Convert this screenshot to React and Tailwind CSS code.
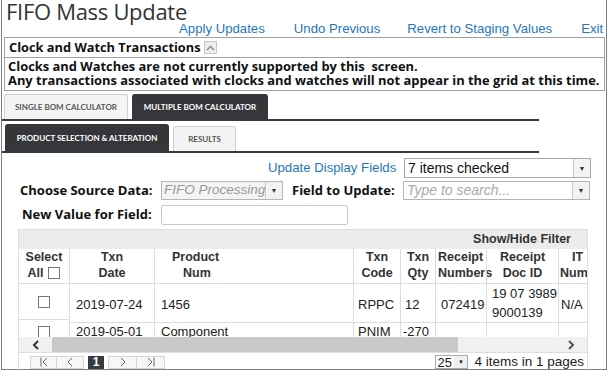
import React from 'react';

const linkCls = 'shrink-0 whitespace-nowrap text-[#2677bb] hover:underline cursor-pointer';

function Arrow() {
  return (
    <span className="flex h-full w-[17px] shrink-0 items-center justify-center border-l border-[#c9c9c9] bg-[#f3f3f3]">
      <span className="text-[7px] leading-none text-[#333]">▼</span>
    </span>
  );
}

function Check() {
  return <span className="inline-block h-[12px] w-[12px] border border-[#767676] bg-white" />;
}

function App() {
  const head = [
    ['Select', 'All'],
    ['Txn', 'Date'],
    ['Product', 'Num'],
    ['Txn', 'Code'],
    ['Txn', 'Qty'],
    ['Receipt', 'Numbers'],
    ['Receipt', 'Doc ID'],
    ['IT', 'Num'],
  ];

  return (
    <div className="h-[372px] w-[608px] overflow-hidden bg-white">
      <div className="relative ml-[1px] h-[370px] w-[606px] border-x border-b border-[#808080] font-['Liberation_Sans',Arial,sans-serif] text-[#222]">
        {/* Title */}
        <h1 className="whitespace-nowrap pl-[4px] font-['Open_Sans',sans-serif] text-[22px] leading-[22px] tracking-[-0.3px] text-[#333]">FIFO Mass Update</h1>
        <div className="flex h-[14px] items-center whitespace-nowrap text-[13.2px] leading-none">
          <span className={`ml-[177px] ${linkCls}`}>Apply Updates</span>
          <span className={`ml-[29px] ${linkCls}`}>Undo Previous</span>
          <span className={`ml-[27px] ${linkCls}`}>Revert to Staging Values</span>
          <span className={`ml-[29px] ${linkCls}`}>Exit</span>
        </div>

        {/* Clock panel */}
        <div className="ml-[2px] mt-[1px] w-[601px] border border-[#a0a0a0] font-['Open_Sans',sans-serif] font-bold text-[#111]">
          <div className="flex h-[20px] items-center border-b border-[#a0a0a0] pl-[4px] text-[12.8px]">
            Clock and Watch Transactions
            <span className="ml-[3px] flex h-[13px] w-[13px] items-center justify-center border border-[#c8c8c8] bg-[#ececec]">
              <svg width="9" height="6" viewBox="0 0 9 6"><path d="M1 5 L4.5 1.5 L8 5" fill="none" stroke="#888" strokeWidth="1.4" /></svg>
            </span>
          </div>
          <div className="whitespace-pre px-[3px] pb-[3px] pt-[1px] text-[12.9px] leading-[14px]">
            <div>Clocks and Watches are not currently supported by this  screen.</div>
            <div>Any transactions associated with clocks and watches will not appear in the grid at this time.</div>
          </div>
        </div>

        {/* Outer tabs */}
        <div className="mt-[3px] flex w-[537px] items-end gap-[4px] border-b-[2px] border-[#3a3b3f] pl-[2px] font-['Lato',sans-serif] text-[8px] font-bold">
          <div className="flex h-[25px] w-[124px] items-center justify-center rounded-t-[3px] border border-b-0 border-[#cfcfcf] bg-[#f4f4f4] text-[#555]">SINGLE BOM CALCULATOR</div>
          <div className="flex h-[25px] w-[136px] items-center justify-center rounded-t-[3px] bg-[#35363a] text-white">MULTIPLE BOM CALCULATOR</div>
        </div>
        <div className="mt-[3px] flex w-[537px] items-end gap-[4px] border-b-[2px] border-[#3a3b3f] pl-[3px] font-['Lato',sans-serif] text-[8px] font-bold">
          <div className="flex h-[27px] w-[164px] items-center justify-center rounded-t-[3px] bg-[#35363a] text-white">PRODUCT SELECTION &amp; ALTERATION</div>
          <div className="flex h-[25px] w-[63px] items-center justify-center rounded-t-[3px] border border-b-0 border-[#cfcfcf] bg-[#f4f4f4] text-[#555]">RESULTS</div>
        </div>

        {/* Form */}
        <div className="mt-[5px] flex h-[20px] items-center">
          <span className={`ml-[266px] w-[136px] text-[13.2px] ${linkCls}`}>Update Display Fields</span>
          <div className="flex h-[20px] w-[187px] items-center border border-[#a9a9a9] bg-white">
            <span className="flex-1 pl-[3px] text-[14px] text-[#111]">7 items checked</span>
            <Arrow />
          </div>
        </div>
        <div className="mt-[3px] flex h-[19px] items-center whitespace-nowrap font-['Open_Sans',sans-serif] text-[13px] font-bold text-[#111]">
          <span className="ml-[18px] w-[141px]">Choose Source Data:</span>
          <div className="flex h-[19px] w-[122px] items-center border border-[#b5b5b5] bg-[#f4f4f4]">
            <span className="flex-1 overflow-hidden pl-[2px] font-['Liberation_Sans',Arial,sans-serif] text-[13.5px] font-normal italic text-[#999]">FIFO Processing</span>
            <Arrow />
          </div>
          <span className="ml-[9px] w-[111px]">Field to Update:</span>
          <div className="flex h-[19px] w-[187px] items-center border border-[#b5b5b5] bg-white">
            <span className="flex-1 pl-[3px] font-['Liberation_Sans',Arial,sans-serif] text-[14px] font-normal italic text-[#aaa]">Type to search...</span>
            <Arrow />
          </div>
        </div>
        <div className="mt-[5px] flex h-[20px] items-center whitespace-nowrap font-['Open_Sans',sans-serif] text-[13px] font-bold text-[#111]">
          <span className="ml-[20px] w-[139px]">New Value for Field:</span>
          <div className="h-[20px] w-[187px] rounded-[2px] border border-[#c8c8c8] bg-white" />
        </div>

        {/* Grid */}
        <div className="ml-[16px] mt-[4px] w-[570px] overflow-hidden border-x border-t border-[#dedede] text-[13px]">
          <div className="flex h-[19px] items-center justify-end bg-[#ececec] pr-[16px] text-[12.5px] font-bold text-[#333]">Show/Hide Filter</div>
          <div className="h-[88px] overflow-hidden">
            <div className="grid w-[570px] grid-cols-[50px_85px_199px_47px_35px_51px_72px_31px]">
              {head.map(([a, b], i) => (
                <div key={i} className={`flex h-[35px] flex-col justify-center whitespace-nowrap border-b border-[#dcdcdc] pb-[3px] text-[12.5px] font-bold leading-[16px] text-[#333] ${i > 0 ? 'border-l' : ''} ${i === 2 ? 'pl-[17px]' : i === 5 ? 'pl-[2px]' : i === 7 ? 'pl-[1px]' : 'items-center'}`}>
                  <span className={i === 7 ? 'pl-[12px]' : ''}>{a}</span>
                  {i === 0 ? (
                    <span className="flex items-center gap-[5px]">All <Check /></span>
                  ) : (
                    <span className={i === 2 ? 'pl-[11px]' : ''}>{b}</span>
                  )}
                </div>
              ))}

              {/* row 1 */}
              <div className="flex h-[36px] items-center justify-center border-b border-[#dcdcdc]"><Check /></div>
              <div className="flex items-center border-b border-l border-[#dcdcdc] pl-[6px] pt-[3px]">2019-07-24</div>
              <div className="flex items-center border-b border-l border-[#dcdcdc] pl-[6px] pt-[3px]">1456</div>
              <div className="flex items-center border-b border-l border-[#dcdcdc] pl-[4px] pt-[3px]">RPPC</div>
              <div className="flex items-center border-b border-l border-[#dcdcdc] pl-[4px] pt-[3px]">12</div>
              <div className="flex items-center border-b border-l border-[#dcdcdc] pl-[5px] pt-[3px]">072419</div>
              <div className="flex flex-col justify-center whitespace-nowrap border-b border-l border-[#dcdcdc] pl-[5px] leading-[19px]">
                <span>19 07 3989</span>
                <span>9000139</span>
              </div>
              <div className="flex items-center border-b border-l border-[#dcdcdc] pl-[2px] pt-[3px]">N/A</div>

              {/* row 2 */}
              <div className="flex h-[18px] items-center justify-center border-b border-[#dcdcdc]"><Check /></div>
              <div className="flex h-[18px] items-center border-b border-l border-[#dcdcdc] pl-[6px] leading-[16px]">2019-05-01</div>
              <div className="flex h-[18px] items-center border-b border-l border-[#dcdcdc] pl-[6px] leading-[16px]">Component</div>
              <div className="flex h-[18px] items-center border-b border-l border-[#dcdcdc] pl-[4px] leading-[16px]">PNIM</div>
              <div className="flex h-[18px] items-center border-b border-l border-[#dcdcdc] pl-[2px] leading-[16px]">-270</div>
              <div className="border-b border-l border-[#dcdcdc]" />
              <div className="border-b border-l border-[#dcdcdc]" />
              <div className="border-b border-l border-[#dcdcdc]" />
            </div>
          </div>

          {/* scrollbar */}
          <div className="flex h-[15px] items-center bg-[#f1f1f1]">
            <span className="flex w-[33px] justify-center">
              <svg width="8" height="10" viewBox="0 0 8 10"><path d="M6 1 L2 5 L6 9" fill="none" stroke="#333" strokeWidth="2" /></svg>
            </span>
            <span className="h-[15px] w-[406px] bg-[#c9c9c9]" />
            <span className="flex-1" />
            <span className="flex w-[33px] justify-center">
              <svg width="8" height="10" viewBox="0 0 8 10"><path d="M2 1 L6 5 L2 9" fill="none" stroke="#555" strokeWidth="2" /></svg>
            </span>
          </div>

          {/* pager */}
          <div className="flex h-[19px] items-center border-t border-[#dedede] pl-[11px] text-[14px]">
            <div className="flex h-[13px] items-center text-[#777]">
              <span className="flex h-[13px] w-[27px] items-center justify-center border border-[#d4d4d4] bg-[#f7f7f7]">
                <svg width="10" height="10" viewBox="0 0 10 10"><path d="M2 0.5 V9.5 M8 1 L4 5 L8 9" fill="none" stroke="#666" strokeWidth="1" /></svg>
              </span>
              <span className="flex h-[13px] w-[27px] items-center justify-center border border-l-0 border-[#d4d4d4] bg-[#f7f7f7]">
                <svg width="10" height="10" viewBox="0 0 10 10"><path d="M7 1 L3 5 L7 9" fill="none" stroke="#666" strokeWidth="1" /></svg>
              </span>
              <span className="mx-[4px] flex h-[13px] w-[16px] items-center justify-center bg-[#3a3b3f] text-[12px] font-bold text-white">1</span>
              <span className="flex h-[13px] w-[29px] items-center justify-center border border-[#d4d4d4] bg-[#f7f7f7]">
                <svg width="10" height="10" viewBox="0 0 10 10"><path d="M3 1 L7 5 L3 9" fill="none" stroke="#666" strokeWidth="1" /></svg>
              </span>
              <span className="flex h-[13px] w-[28px] items-center justify-center border border-l-0 border-[#d4d4d4] bg-[#f7f7f7]">
                <svg width="10" height="10" viewBox="0 0 10 10"><path d="M2 1 L6 5 L2 9 M8 0.5 V9.5" fill="none" stroke="#666" strokeWidth="1" /></svg>
              </span>
            </div>
            <span className="flex-1" />
            <div className="flex h-[14px] w-[33px] items-center border border-[#a9a9a9] bg-white">
              <span className="flex-1 pl-[1px] text-[13px] leading-none">25</span>
              <span className="flex h-full w-[13px] items-center justify-center bg-[#efefef] text-[6px]">▼</span>
            </div>
            <span className="ml-[6px] mr-[3px] whitespace-nowrap text-[13.5px] text-[#222]">4 items in 1 pages</span>
          </div>
        </div>
      </div>
    </div>
  );
}

export default App;
